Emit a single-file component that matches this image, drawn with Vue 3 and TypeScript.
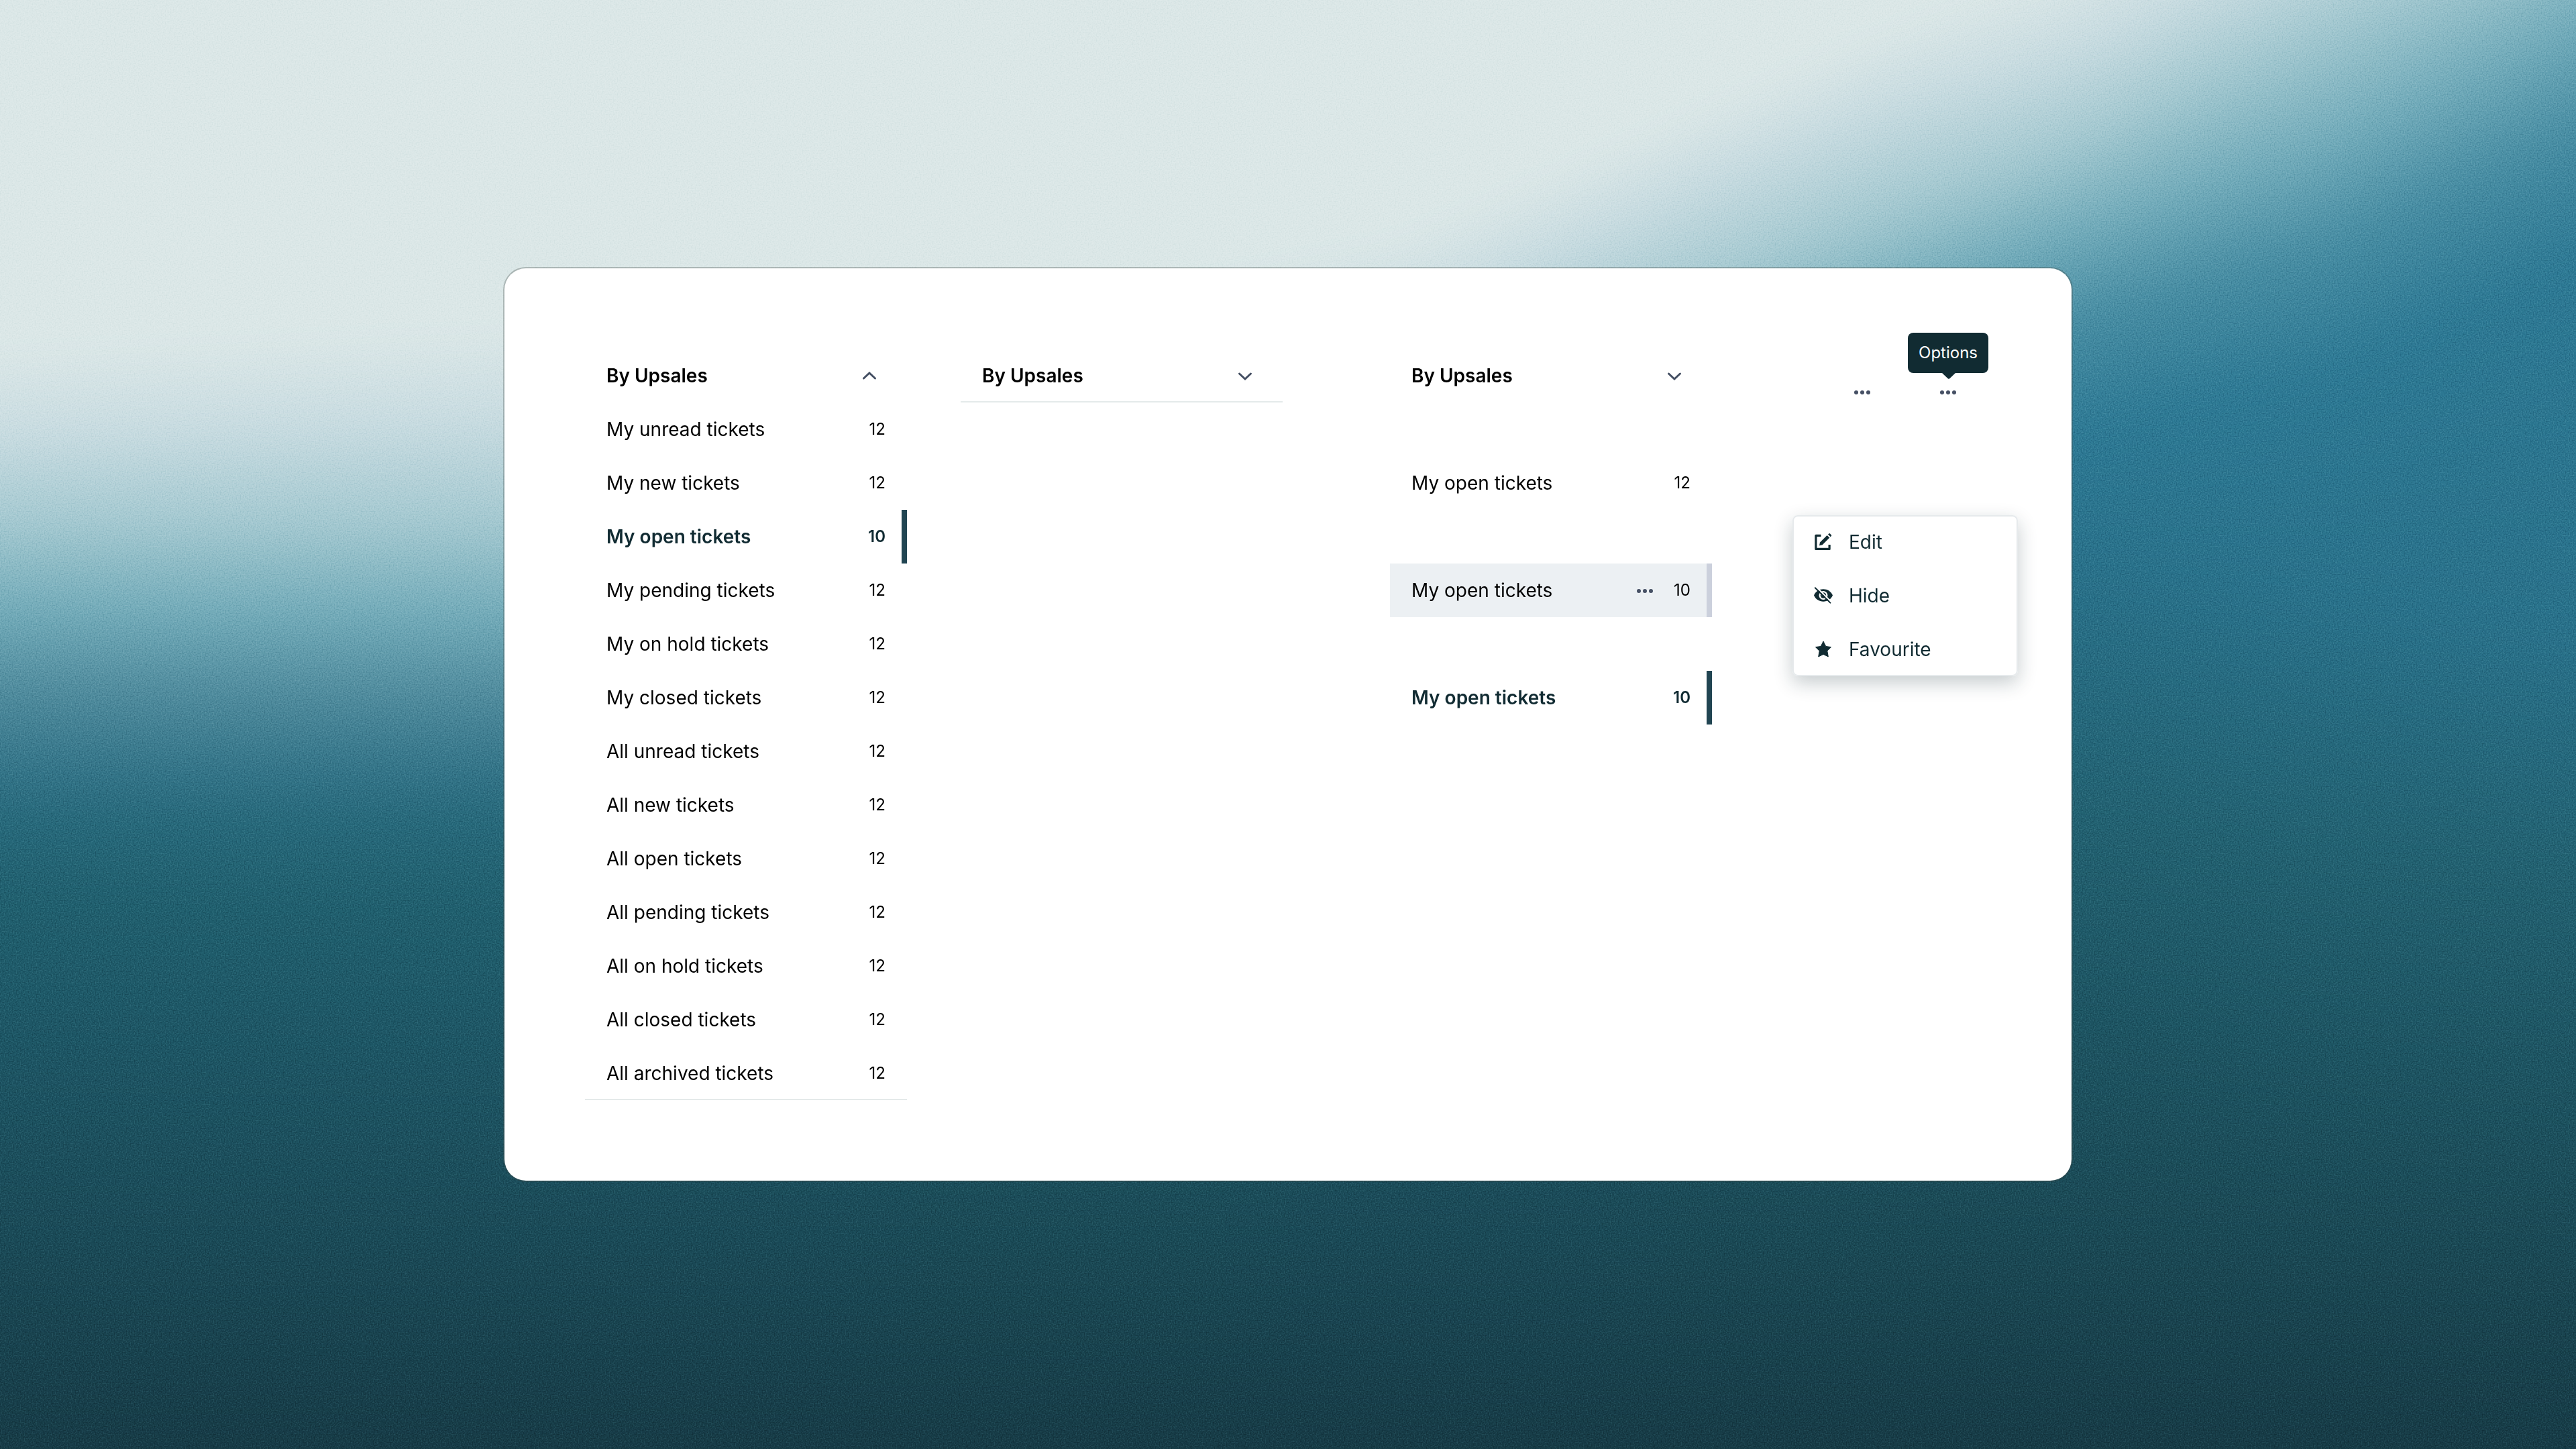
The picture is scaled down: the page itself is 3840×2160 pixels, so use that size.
<script setup lang="ts">
interface Ticket {
  label: string
  count: number
  state?: 'active' | 'hover'
}

interface Band {
  x: number
  y: number[]
}

const tickets: Ticket[] = [
  { label: 'My unread tickets', count: 12 },
  { label: 'My new tickets', count: 12 },
  { label: 'My open tickets', count: 10, state: 'active' },
  { label: 'My pending tickets', count: 12 },
  { label: 'My on hold tickets', count: 12 },
  { label: 'My closed tickets', count: 12 },
  { label: 'All unread tickets', count: 12 },
  { label: 'All new tickets', count: 12 },
  { label: 'All open tickets', count: 12 },
  { label: 'All pending tickets', count: 12 },
  { label: 'All on hold tickets', count: 12 },
  { label: 'All closed tickets', count: 12 },
  { label: 'All archived tickets', count: 12 },
]

const rowStates: Ticket[] = [
  { label: 'My open tickets', count: 12 },
  { label: 'My open tickets', count: 10, state: 'hover' },
  { label: 'My open tickets', count: 10, state: 'active' },
]

// Backdrop: palette bands sit at a different height at each x,
// and shift from teal on the left to blue on the right.
type Rgb = [number, number, number]

const leftPalette: Rgb[] = [
  [219, 231, 231], [201, 220, 225], [163, 200, 208], [113, 170, 184], [78, 138, 156], [50, 115, 135],
  [38, 104, 122], [31, 94, 109], [28, 84, 99], [25, 72, 85], [21, 56, 67],
]

const rightPalette: Rgb[] = [
  [219, 231, 231], [201, 220, 225], [163, 200, 208], [112, 170, 185], [70, 140, 162], [44, 120, 147],
  [40, 112, 137], [33, 96, 112], [28, 83, 97], [25, 71, 83], [21, 56, 67],
]

const bands: Band[] = [
  { x: -200, y: [530, 650, 780, 910, 1030, 1150, 1220, 1340, 1560, 1860, 2200] },
  { x: 752, y: [490, 620, 780, 920, 1040, 1150, 1220, 1350, 1570, 1860, 2200] },
  { x: 1600, y: [450, 570, 730, 870, 980, 1100, 1180, 1340, 1570, 1860, 2200] },
  { x: 2100, y: [350, 470, 620, 750, 870, 1000, 1100, 1300, 1560, 1860, 2200] },
  { x: 2500, y: [180, 280, 450, 580, 700, 880, 1000, 1250, 1550, 1860, 2200] },
  { x: 2800, y: [50, 155, 320, 460, 580, 760, 930, 1230, 1530, 1860, 2200] },
  { x: 3088, y: [-50, 70, 215, 350, 480, 650, 850, 1220, 1520, 1850, 2200] },
  { x: 3464, y: [-280, -100, 40, 220, 370, 560, 900, 1270, 1570, 1860, 2200] },
  { x: 4100, y: [-560, -440, -230, -80, 80, 280, 980, 1310, 1610, 1890, 2200] },
]

const stripWidth = 40

function bandAt(x: number): number[] {
  const next = Math.max(1, bands.findIndex((b) => b.x >= x))
  const a = bands[next - 1]
  const b = bands[next]
  const t = (x - a.x) / (b.x - a.x)
  return a.y.map((v, i) => v + (b.y[i] - v) * t)
}

function colorAt(x: number, k: number): string {
  const t = Math.min(1, Math.max(0, (x - 752) / 2300))
  const rgb = leftPalette[k].map((v, i) => Math.round(v + (rightPalette[k][i] - v) * t))
  return `rgb(${rgb.join(',')})`
}

const strips = Array.from({ length: 104 }, (_, i) => {
  const x = -160 + i * stripWidth
  const ys = bandAt(x + stripWidth / 2)
  return {
    id: `strip-${i}`,
    x,
    stops: ys.map((y, k) => ({ offset: (y + 600) / 3000, color: colorAt(x, k) })),
  }
})
</script>

<template>
  <main class="page">
    <svg class="backdrop" viewBox="0 0 3840 2160" preserveAspectRatio="none" aria-hidden="true">
      <defs>
        <linearGradient
          v-for="s in strips"
          :id="s.id"
          :key="s.id"
          gradientUnits="userSpaceOnUse"
          x1="0"
          y1="-600"
          x2="0"
          y2="2400"
        >
          <stop v-for="(p, k) in s.stops" :key="k" :offset="p.offset" :stop-color="p.color" />
        </linearGradient>
        <filter
          id="soften"
          filterUnits="userSpaceOnUse"
          x="-160"
          y="-160"
          width="4160"
          height="2480"
          color-interpolation-filters="sRGB"
        >
          <feGaussianBlur stdDeviation="40 24" />
        </filter>
        <filter id="grain" x="0" y="0" width="1" height="1" color-interpolation-filters="sRGB">
          <feTurbulence type="fractalNoise" baseFrequency="0.5" numOctaves="2" seed="4" />
          <feColorMatrix values="1.2 0 0 0 -0.08  1.2 0 0 0 -0.08  1.2 0 0 0 -0.08  0 0 0 0 1" />
        </filter>
      </defs>
      <g filter="url(#soften)">
        <rect
          v-for="s in strips"
          :key="s.id"
          :x="s.x"
          y="-160"
          :width="stripWidth + 1"
          height="2480"
          :fill="`url(#${s.id})`"
        />
      </g>
      <rect class="grain" width="3840" height="2160" filter="url(#grain)" />
    </svg>

    <section class="card">
      <nav class="group ruled" aria-label="Tickets by Upsales">
        <button class="head" type="button" aria-expanded="true">
          By Upsales
          <svg class="chevron" viewBox="0 0 32 32" aria-hidden="true"><path d="M7.5 20l8.500-8 8.500 8" /></svg>
        </button>
        <ul class="list">
          <li v-for="t in tickets" :key="t.label" class="row" :class="t.state">
            <a class="label" href="#">{{ t.label }}</a>
            <span class="count">{{ t.count }}</span>
          </li>
        </ul>
      </nav>

      <nav class="group ruled" aria-label="Collapsed group">
        <button class="head" type="button" aria-expanded="false">
          By Upsales
          <svg class="chevron" viewBox="0 0 32 32" aria-hidden="true"><path d="M7.500 13l8.500 8 8.500-8" /></svg>
        </button>
      </nav>

      <nav class="group states" aria-label="Row states">
        <button class="head" type="button" aria-expanded="false">
          By Upsales
          <svg class="chevron" viewBox="0 0 32 32" aria-hidden="true"><path d="M7.500 13l8.500 8 8.500-8" /></svg>
        </button>
        <ul class="list spaced">
          <li v-for="(t, i) in rowStates" :key="i" class="row" :class="t.state">
            <a class="label" href="#">{{ t.label }}</a>
            <button v-if="t.state === 'hover'" class="more" type="button" aria-label="Options">
              <svg viewBox="0 0 48 48" aria-hidden="true">
                <circle cx="15" cy="25" r="3" /><circle cx="24" cy="25" r="3" /><circle cx="33" cy="25" r="3" />
              </svg>
            </button>
            <span class="count">{{ t.count }}</span>
          </li>
        </ul>
      </nav>

      <aside class="side">
        <div class="actions">
          <button class="more" type="button" aria-label="More">
            <svg viewBox="0 0 48 48" aria-hidden="true">
              <circle cx="15" cy="25" r="3" /><circle cx="24" cy="25" r="3" /><circle cx="33" cy="25" r="3" />
            </svg>
          </button>
          <button class="more" type="button" aria-describedby="options-tip">
            <svg viewBox="0 0 48 48" aria-hidden="true">
              <circle cx="15" cy="25" r="3" /><circle cx="24" cy="25" r="3" /><circle cx="33" cy="25" r="3" />
            </svg>
            <span id="options-tip" class="tooltip" role="tooltip">Options</span>
          </button>
        </div>

        <div class="menu" role="menu">
          <button class="item" type="button" role="menuitem">
            <svg class="icon" viewBox="0 0 28 28" aria-hidden="true">
              <path
                d="M10.500 2.700H2.800a1.500 1.500 0 0 0-1.500 1.500v20.300a1.500 1.500 0 0 0 1.500 1.500h20.400a1.500 1.500 0 0 0 1.500-1.500v-6.500h-3.200v4.800H4.500V5.900h6z"
              />
              <path d="M19.600 3.900l3.700 3.700L12.600 18.300l-4.600 1 1-4.700z" />
              <path d="M21 2.600l1.300-1.200a1.200 1.200 0 0 1 1.600 0l2 2a1.200 1.200 0 0 1 0 1.600l-1.200 1.300z" />
            </svg>
            Edit
          </button>
          <button class="item" type="button" role="menuitem">
            <svg class="icon" viewBox="0 0 28 28" aria-hidden="true">
              <path
                fill-rule="evenodd"
                d="M0 13.500C2.500 7.500 8 4.300 14 4.300s11.500 3.200 14 9.200c-2.500 6-8 9.200-14 9.200S2.500 19.500 0 13.500zM14 7a6.500 6.500 0 1 0 0 13 6.500 6.500 0 0 0 0-13z"
              />
              <circle cx="14" cy="13.500" r="4.200" />
              <path class="glint" d="M12.500 13.500a1.800 1.800 0 0 1 1.800-1.800" />
              <path class="gap" d="M3.200 0.700l23 22.800" />
              <path class="slash" d="M1.800 2.300l22.600 22.300" />
            </svg>
            Hide
          </button>
          <button class="item" type="button" role="menuitem">
            <svg class="icon" viewBox="0 0 28 28" aria-hidden="true">
              <path
                class="star"
                d="M14 2l3.700 7.500 7.900 1.100-5.800 5.700 1.500 8.600L14 21.400l-7.300 3.500 1.500-8.600-5.800-5.700 7.900-1.100z"
              />
            </svg>
            Favourite
          </button>
        </div>
      </aside>
    </section>
  </main>
</template>

<style>
body {
  margin: 0;
}
</style>

<style scoped>
.page {
  position: relative;
  display: flex;
  align-items: center;
  justify-content: center;
  box-sizing: border-box;
  min-height: 100vh;
  padding: 48px;
  overflow: hidden;
  background: #205f6e;
  font-family: Inter, "Liberation Sans", sans-serif;
  font-size: 28px;
  line-height: 40px;
  color: #000;
}

.backdrop {
  position: absolute;
  inset: 0;
  width: 100%;
  height: 100%;
}

.grain {
  mix-blend-mode: soft-light;
  opacity: 0.4;
}

.card {
  position: relative;
  display: grid;
  grid-template-columns: 480fr 480fr 560fr 376fr;
  column-gap: 80px;
  align-items: start;
  box-sizing: border-box;
  width: 100%;
  max-width: 2336px;
  padding: 120px 80px 120px 120px;
  border-radius: 32px;
  background: #fff;
  box-shadow: 0 0 0 2px rgba(60, 70, 65, 0.3);
}

button {
  border: 0;
  padding: 0;
  background: none;
  font: inherit;
  color: inherit;
  text-align: left;
  cursor: pointer;
}

.group {
  position: relative;
}

.states {
  margin-left: 80px;
}

.ruled {
  box-shadow: inset 0 -2px 0 #e4eaea;
}

.head {
  display: flex;
  align-items: center;
  justify-content: space-between;
  box-sizing: border-box;
  width: 100%;
  height: 80px;
  padding: 0 40px 0 32px;
  font-weight: 600;
}

.chevron {
  width: 32px;
  height: 32px;
  fill: none;
  stroke: #434e62;
  stroke-width: 3;
  stroke-linecap: round;
}

.list {
  margin: 0;
  padding: 0;
  list-style: none;
}

.spaced {
  display: grid;
  gap: 80px;
  padding-top: 80px;
}

.row {
  display: flex;
  align-items: center;
  box-sizing: border-box;
  height: 80px;
  padding: 0 24px 0 32px;
  border-right: 8px solid transparent;
}

.row.active {
  border-right-color: #214552;
  color: #112b32;
  font-weight: 600;
}

.row.hover {
  border-right-color: #cbd0dc;
  background: #ecf0f3;
}

.label {
  flex: 1;
  color: inherit;
  text-decoration: none;
}

.count {
  min-width: 28px;
  font-size: 24px;
  font-optical-sizing: none;
  text-align: right;
}

.more {
  position: relative;
  width: 48px;
  height: 48px;
}

.more svg {
  display: block;
  width: 48px;
  height: 48px;
  fill: #465064;
}

.row .more {
  margin-right: 16px;
}

.side {
  margin-left: 40px;
  color: #112b32;
}

.actions {
  display: flex;
  gap: 80px;
  padding: 40px 0 0 80px;
}

.tooltip {
  position: absolute;
  bottom: calc(100% + 4px);
  left: 50%;
  padding: 12px 16px;
  border-radius: 8px;
  background: #112b32;
  color: #fff;
  font-size: 24px;
  font-optical-sizing: none;
  line-height: 36px;
  transform: translateX(-50%);
}

.tooltip::after {
  content: "";
  position: absolute;
  top: 100%;
  left: 50%;
  width: 20px;
  height: 9px;
  margin-left: -9px;
  background: #112b32;
  clip-path: polygon(0 0, 100% 0, 58% 90%, 50% 100%, 42% 90%);
}

.menu {
  display: flex;
  flex-direction: column;
  margin-top: 160px;
  border-radius: 8px;
  background: #fff;
  box-shadow: inset 0 0 0 2px #e6eaec, 0 10px 28px rgba(17, 43, 50, 0.24);
}

.item {
  display: flex;
  align-items: center;
  gap: 24px;
  height: 80px;
  padding: 0 32px;
}

.icon {
  width: 28px;
  height: 28px;
  fill: #112b32;
}

.glint {
  fill: none;
  stroke: #fff;
  stroke-width: 2;
}

.gap {
  fill: none;
  stroke: #fff;
  stroke-width: 2;
}

.slash {
  fill: none;
  stroke: #112b32;
  stroke-width: 2;
  stroke-linecap: round;
}

.star {
  stroke: #112b32;
  stroke-width: 1;
  stroke-linejoin: round;
}
</style>
